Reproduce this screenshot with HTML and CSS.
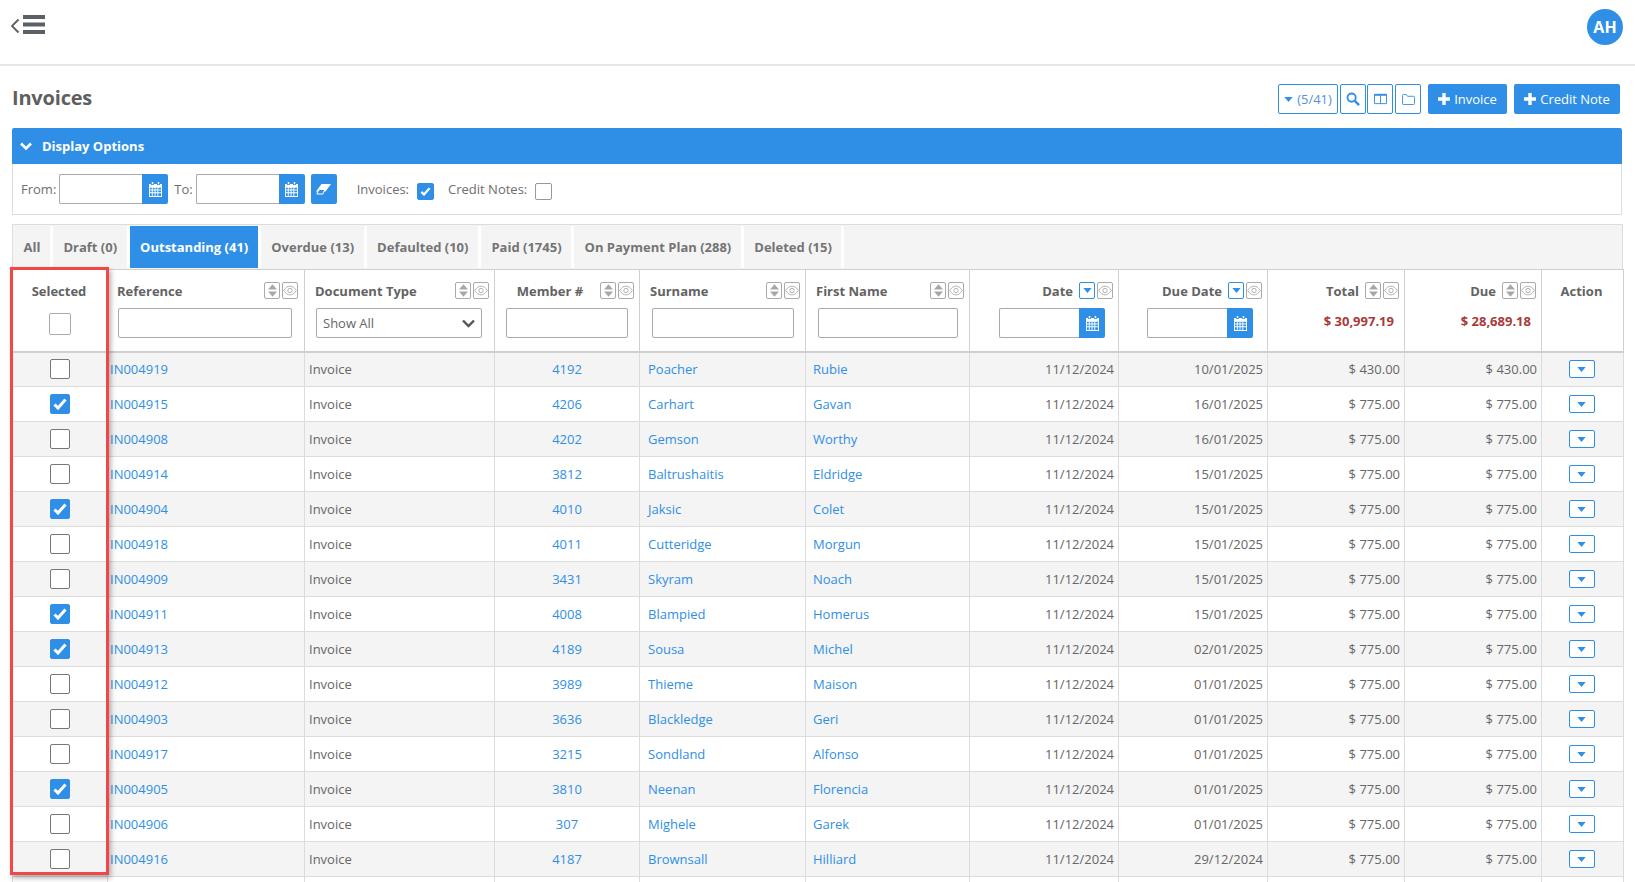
FILE: index.html
```html
<!DOCTYPE html>
<html lang="en">
<head>
<meta charset="utf-8">
<title>Invoices</title>
<link rel="stylesheet" href="styles.css">
</head>
<body>
<svg class="defs" width="0" height="0" aria-hidden="true">
  <symbol id="cal" viewBox="0 0 14 16"><path fill="currentColor" fill-rule="evenodd" d="M3 0h1.6v2.4H3zM9.4 0H11v2.4H9.400zM0 2h2.200v1.200h3.200V2h3.200v1.200h3.200V2H14v14H0zM1 6v2h2V6zm3 0v2h2V6zm3 0v2h2V6zm3 0v2h3V6zM1 9v2h2V9zm3 0v2h2V9zm3 0v2h2V9zm3 0v2h3V9zM1 12v3h2v-3zm3 0v3h2v-3zm3 0v3h2v-3zm3 0v3h3v-3z"/></symbol>
  <symbol id="caret" viewBox="0 0 10 6"><path fill="currentColor" d="M0 0h10L5 6z"/></symbol>
  <symbol id="sort" viewBox="0 0 10 14"><path fill="#a5a8ab" d="M5 0l5 6H0zM0 8h10l-5 6z"/></symbol>
  <symbol id="eye" viewBox="0 0 16 12"><path fill="none" stroke="#a5a8ab" d="M.8 6C3 2.500 5.500 1 8 1s5 1.500 7.200 5C13 9.500 10.500 11 8 11S3 9.500.8 6z"/><circle cx="8" cy="6" r="2.500" fill="none" stroke="#a5a8ab"/></symbol>
  <symbol id="check" viewBox="0 0 14 12"><path fill="none" stroke="#fff" stroke-width="3" d="M1.500 6.500l3.500 3.500 7.500-8.500"/></symbol>
  <symbol id="plus" viewBox="0 0 12 12"><path fill="#fff" d="M4.300 0h3.400v4.300H12v3.400H7.700V12H4.300V7.700H0V4.300h4.300z"/></symbol>
</svg>

<header class="topbar">
  <svg class="menu" width="36" height="22" viewBox="0 0 36 22"><path fill="none" stroke="#5b6066" stroke-width="1.800" d="M8.500 4.500L2 11l6.500 6.500"/><path fill="#5b6066" d="M13 0h22v4H13zM13 7.500h22v4H13zM13 15h22v4H13z"/></svg>
  <div class="avatar">AH</div>
</header>

<main class="main">
  <div class="title-row">
    <h1 class="title">Invoices</h1>
    <div class="tools">
      <button class="out out-count"><svg class="i-caret"><use href="#caret"/></svg>(5/41)</button>
      <button class="out out-icon out-search"><svg width="14" height="14" viewBox="0 0 15 15"><circle cx="6" cy="6" r="4.400" fill="none" stroke="currentColor" stroke-width="2"/><path stroke="currentColor" stroke-width="2.600" d="M9.500 9.500l4.500 4.500"/></svg></button>
      <button class="out out-icon"><svg width="13" height="12" viewBox="0 0 14 13"><path fill="none" stroke="currentColor" d="M.5 1.500h13v10H.5zM7 1.500v10"/><path fill="currentColor" d="M.5 1h13v2H.5z"/></svg></button>
      <button class="out out-icon"><svg width="13" height="11" viewBox="0 0 14 12"><path fill="none" stroke="currentColor" d="M.5 10.500v-9a1 1 0 0 1 1-1h3l1.500 2h6.500a1 1 0 0 1 1 1v7a1 1 0 0 1-1 1h-11a1 1 0 0 1-1-1z"/></svg></button>
      <button class="solid solid-inv"><svg class="i-plus"><use href="#plus"/></svg>Invoice</button>
      <button class="solid solid-cn"><svg class="i-plus"><use href="#plus"/></svg>Credit Note</button>
    </div>
  </div>

  <section class="options">
    <div class="options-head">
      <svg class="chev" width="12" height="9" viewBox="0 0 12 9"><path fill="none" stroke="#fff" stroke-width="2.600" d="M1 1.500l5 5 5-5"/></svg>
      <span>Display Options</span>
    </div>
    <div class="options-body">
      <label class="lbl lbl-from">From:</label>
      <div class="dategroup dg-top"><input class="dateinput" type="text"><span class="addon"><svg class="i-cal"><use href="#cal"/></svg></span></div>
      <label class="lbl lbl-to">To:</label>
      <div class="dategroup dg-top"><input class="dateinput" type="text"><span class="addon"><svg class="i-cal"><use href="#cal"/></svg></span></div>
      <button class="eraser"><svg width="15" height="11" viewBox="0 0 15 11"><path fill="#fff" d="M5.500 0H15L9.500 7.500H0z"/><path fill="#2f8fe6" stroke="#fff" d="M1.500 8l2-2.500H9L7.500 8 7 10H1z"/></svg></button>
      <label class="lbl lbl-inv">Invoices:</label>
      <span class="cb cb-s on"><svg class="i-check"><use href="#check"/></svg></span>
      <label class="lbl lbl-cn">Credit Notes:</label>
      <span class="cb cb-s"></span>
    </div>
  </section>

  <nav class="tabs">
    <a class="tab">All</a>
    <a class="tab">Draft (0)</a>
    <a class="tab active">Outstanding (41)</a>
    <a class="tab">Overdue (13)</a>
    <a class="tab">Defaulted (10)</a>
    <a class="tab">Paid (1745)</a>
    <a class="tab">On Payment Plan (288)</a>
    <a class="tab">Deleted (15)</a>
  </nav>

  <table class="grid">
    <colgroup>
      <col class="c1"><col class="c2"><col class="c3"><col class="c4"><col class="c5"><col class="c6"><col class="c7"><col class="c8"><col class="c9"><col class="c10"><col class="c11">
    </colgroup>
    <thead>
      <tr>
        <th>
          <div class="hd"><span class="hl center nudge-l">Selected</span></div>
          <div class="hf center-box"><span class="cb cb-h"></span></div>
        </th>
        <th class="th-ref">
          <div class="hd"><span class="hl left">Reference</span><span class="sb"><svg class="i-sort"><use href="#sort"/></svg></span><span class="sb"><svg class="i-eye"><use href="#eye"/></svg></span></div>
          <div class="hf"><input class="filter" type="text"></div>
        </th>
        <th>
          <div class="hd"><span class="hl left">Document Type</span><span class="sb"><svg class="i-sort"><use href="#sort"/></svg></span><span class="sb"><svg class="i-eye"><use href="#eye"/></svg></span></div>
          <div class="hf"><div class="select"><span>Show All</span><svg width="13" height="9" viewBox="0 0 13 9"><path fill="none" stroke="#555" stroke-width="2.400" d="M1 1.500l5.500 5.500L12 1.500"/></svg></div></div>
        </th>
        <th>
          <div class="hd"><span class="hl center nudge-r">Member #</span><span class="sb"><svg class="i-sort"><use href="#sort"/></svg></span><span class="sb"><svg class="i-eye"><use href="#eye"/></svg></span></div>
          <div class="hf"><input class="filter" type="text"></div>
        </th>
        <th>
          <div class="hd"><span class="hl left">Surname</span><span class="sb"><svg class="i-sort"><use href="#sort"/></svg></span><span class="sb"><svg class="i-eye"><use href="#eye"/></svg></span></div>
          <div class="hf hf-m"><input class="filter" type="text"></div>
        </th>
        <th>
          <div class="hd"><span class="hl left">First Name</span><span class="sb"><svg class="i-sort"><use href="#sort"/></svg></span><span class="sb"><svg class="i-eye"><use href="#eye"/></svg></span></div>
          <div class="hf hf-m"><input class="filter" type="text"></div>
        </th>
        <th>
          <div class="hd"><span class="hl right">Date</span><span class="sb sb-on"><svg class="i-caret"><use href="#caret"/></svg></span><span class="sb"><svg class="i-eye"><use href="#eye"/></svg></span></div>
          <div class="hf hf-date hf-date1"><div class="dategroup dg-col"><input class="dateinput" type="text"><span class="addon"><svg class="i-cal"><use href="#cal"/></svg></span></div></div>
        </th>
        <th>
          <div class="hd"><span class="hl right">Due Date</span><span class="sb sb-on"><svg class="i-caret"><use href="#caret"/></svg></span><span class="sb"><svg class="i-eye"><use href="#eye"/></svg></span></div>
          <div class="hf hf-date"><div class="dategroup dg-col"><input class="dateinput" type="text"><span class="addon"><svg class="i-cal"><use href="#cal"/></svg></span></div></div>
        </th>
        <th>
          <div class="hd"><span class="hl right">Total</span><span class="sb"><svg class="i-sort"><use href="#sort"/></svg></span><span class="sb"><svg class="i-eye"><use href="#eye"/></svg></span></div>
          <div class="sum">$ 30,997.19</div>
        </th>
        <th>
          <div class="hd"><span class="hl right">Due</span><span class="sb"><svg class="i-sort"><use href="#sort"/></svg></span><span class="sb"><svg class="i-eye"><use href="#eye"/></svg></span></div>
          <div class="sum">$ 28,689.18</div>
        </th>
        <th>
          <div class="hd"><span class="hl center nudge-l">Action</span></div>
        </th>
      </tr>
    </thead>
    <tbody>
      <tr><td class="mid"><span class="cb cb-r"></span></td><td class="ref"><a>IN004919</a></td><td class="doc">Invoice</td><td class="mem"><a>4192</a></td><td class="nm"><a>Poacher</a></td><td class="fn"><a>Rubie</a></td><td class="num">11/12/2024</td><td class="num">10/01/2025</td><td class="num">$ 430.00</td><td class="num">$ 430.00</td><td class="mid act-cell"><button class="act"><svg class="i-caret"><use href="#caret"/></svg></button></td></tr>
      <tr><td class="mid"><span class="cb cb-r on"><svg class="i-check-l"><use href="#check"/></svg></span></td><td class="ref"><a>IN004915</a></td><td class="doc">Invoice</td><td class="mem"><a>4206</a></td><td class="nm"><a>Carhart</a></td><td class="fn"><a>Gavan</a></td><td class="num">11/12/2024</td><td class="num">16/01/2025</td><td class="num">$ 775.00</td><td class="num">$ 775.00</td><td class="mid act-cell"><button class="act"><svg class="i-caret"><use href="#caret"/></svg></button></td></tr>
      <tr><td class="mid"><span class="cb cb-r"></span></td><td class="ref"><a>IN004908</a></td><td class="doc">Invoice</td><td class="mem"><a>4202</a></td><td class="nm"><a>Gemson</a></td><td class="fn"><a>Worthy</a></td><td class="num">11/12/2024</td><td class="num">16/01/2025</td><td class="num">$ 775.00</td><td class="num">$ 775.00</td><td class="mid act-cell"><button class="act"><svg class="i-caret"><use href="#caret"/></svg></button></td></tr>
      <tr><td class="mid"><span class="cb cb-r"></span></td><td class="ref"><a>IN004914</a></td><td class="doc">Invoice</td><td class="mem"><a>3812</a></td><td class="nm"><a>Baltrushaitis</a></td><td class="fn"><a>Eldridge</a></td><td class="num">11/12/2024</td><td class="num">15/01/2025</td><td class="num">$ 775.00</td><td class="num">$ 775.00</td><td class="mid act-cell"><button class="act"><svg class="i-caret"><use href="#caret"/></svg></button></td></tr>
      <tr><td class="mid"><span class="cb cb-r on"><svg class="i-check-l"><use href="#check"/></svg></span></td><td class="ref"><a>IN004904</a></td><td class="doc">Invoice</td><td class="mem"><a>4010</a></td><td class="nm"><a>Jaksic</a></td><td class="fn"><a>Colet</a></td><td class="num">11/12/2024</td><td class="num">15/01/2025</td><td class="num">$ 775.00</td><td class="num">$ 775.00</td><td class="mid act-cell"><button class="act"><svg class="i-caret"><use href="#caret"/></svg></button></td></tr>
      <tr><td class="mid"><span class="cb cb-r"></span></td><td class="ref"><a>IN004918</a></td><td class="doc">Invoice</td><td class="mem"><a>4011</a></td><td class="nm"><a>Cutteridge</a></td><td class="fn"><a>Morgun</a></td><td class="num">11/12/2024</td><td class="num">15/01/2025</td><td class="num">$ 775.00</td><td class="num">$ 775.00</td><td class="mid act-cell"><button class="act"><svg class="i-caret"><use href="#caret"/></svg></button></td></tr>
      <tr><td class="mid"><span class="cb cb-r"></span></td><td class="ref"><a>IN004909</a></td><td class="doc">Invoice</td><td class="mem"><a>3431</a></td><td class="nm"><a>Skyram</a></td><td class="fn"><a>Noach</a></td><td class="num">11/12/2024</td><td class="num">15/01/2025</td><td class="num">$ 775.00</td><td class="num">$ 775.00</td><td class="mid act-cell"><button class="act"><svg class="i-caret"><use href="#caret"/></svg></button></td></tr>
      <tr><td class="mid"><span class="cb cb-r on"><svg class="i-check-l"><use href="#check"/></svg></span></td><td class="ref"><a>IN004911</a></td><td class="doc">Invoice</td><td class="mem"><a>4008</a></td><td class="nm"><a>Blampied</a></td><td class="fn"><a>Homerus</a></td><td class="num">11/12/2024</td><td class="num">15/01/2025</td><td class="num">$ 775.00</td><td class="num">$ 775.00</td><td class="mid act-cell"><button class="act"><svg class="i-caret"><use href="#caret"/></svg></button></td></tr>
      <tr><td class="mid"><span class="cb cb-r on"><svg class="i-check-l"><use href="#check"/></svg></span></td><td class="ref"><a>IN004913</a></td><td class="doc">Invoice</td><td class="mem"><a>4189</a></td><td class="nm"><a>Sousa</a></td><td class="fn"><a>Michel</a></td><td class="num">11/12/2024</td><td class="num">02/01/2025</td><td class="num">$ 775.00</td><td class="num">$ 775.00</td><td class="mid act-cell"><button class="act"><svg class="i-caret"><use href="#caret"/></svg></button></td></tr>
      <tr><td class="mid"><span class="cb cb-r"></span></td><td class="ref"><a>IN004912</a></td><td class="doc">Invoice</td><td class="mem"><a>3989</a></td><td class="nm"><a>Thieme</a></td><td class="fn"><a>Maison</a></td><td class="num">11/12/2024</td><td class="num">01/01/2025</td><td class="num">$ 775.00</td><td class="num">$ 775.00</td><td class="mid act-cell"><button class="act"><svg class="i-caret"><use href="#caret"/></svg></button></td></tr>
      <tr><td class="mid"><span class="cb cb-r"></span></td><td class="ref"><a>IN004903</a></td><td class="doc">Invoice</td><td class="mem"><a>3636</a></td><td class="nm"><a>Blackledge</a></td><td class="fn"><a>Geri</a></td><td class="num">11/12/2024</td><td class="num">01/01/2025</td><td class="num">$ 775.00</td><td class="num">$ 775.00</td><td class="mid act-cell"><button class="act"><svg class="i-caret"><use href="#caret"/></svg></button></td></tr>
      <tr><td class="mid"><span class="cb cb-r"></span></td><td class="ref"><a>IN004917</a></td><td class="doc">Invoice</td><td class="mem"><a>3215</a></td><td class="nm"><a>Sondland</a></td><td class="fn"><a>Alfonso</a></td><td class="num">11/12/2024</td><td class="num">01/01/2025</td><td class="num">$ 775.00</td><td class="num">$ 775.00</td><td class="mid act-cell"><button class="act"><svg class="i-caret"><use href="#caret"/></svg></button></td></tr>
      <tr><td class="mid"><span class="cb cb-r on"><svg class="i-check-l"><use href="#check"/></svg></span></td><td class="ref"><a>IN004905</a></td><td class="doc">Invoice</td><td class="mem"><a>3810</a></td><td class="nm"><a>Neenan</a></td><td class="fn"><a>Florencia</a></td><td class="num">11/12/2024</td><td class="num">01/01/2025</td><td class="num">$ 775.00</td><td class="num">$ 775.00</td><td class="mid act-cell"><button class="act"><svg class="i-caret"><use href="#caret"/></svg></button></td></tr>
      <tr><td class="mid"><span class="cb cb-r"></span></td><td class="ref"><a>IN004906</a></td><td class="doc">Invoice</td><td class="mem"><a>307</a></td><td class="nm"><a>Mighele</a></td><td class="fn"><a>Garek</a></td><td class="num">11/12/2024</td><td class="num">01/01/2025</td><td class="num">$ 775.00</td><td class="num">$ 775.00</td><td class="mid act-cell"><button class="act"><svg class="i-caret"><use href="#caret"/></svg></button></td></tr>
      <tr><td class="mid"><span class="cb cb-r"></span></td><td class="ref"><a>IN004916</a></td><td class="doc">Invoice</td><td class="mem"><a>4187</a></td><td class="nm"><a>Brownsall</a></td><td class="fn"><a>Hilliard</a></td><td class="num">11/12/2024</td><td class="num">29/12/2024</td><td class="num">$ 775.00</td><td class="num">$ 775.00</td><td class="mid act-cell"><button class="act"><svg class="i-caret"><use href="#caret"/></svg></button></td></tr>
      <tr><td></td><td></td><td></td><td></td><td></td><td></td><td></td><td></td><td></td><td></td><td></td></tr>
    </tbody>
  </table>
</main>

<div class="highlight"></div>
</body>
</html>
```

FILE: styles.css
```css
* { box-sizing: border-box; }
html, body { margin: 0; height: 882px; overflow: hidden; background: #fff; }
body { font-family: "Open Sans", "Noto Sans", sans-serif; font-size: 13px; color: #666; position: relative; }
.defs { position: absolute; }
button { font-family: inherit; font-size: 13px; padding: 0; cursor: pointer; }
input { font-family: inherit; outline: none; }

.topbar { height: 66px; border-bottom: 2px solid #e6e6e6; display: flex; align-items: flex-start; justify-content: space-between; padding: 15px 12px 0 10px; }
.menu { display: block; }
.avatar { width: 36px; height: 36px; margin-top: -6px; border-radius: 50%; background: #2f8fe6; color: #fff; font-weight: 700; font-size: 16px; display: flex; align-items: center; justify-content: center; }

.main { padding: 18px 12px 0; }
.title-row { display: flex; justify-content: space-between; align-items: flex-start; height: 30px; margin-bottom: 14px; }
.title { margin: 0; font-size: 20px; line-height: 28px; font-weight: 700; letter-spacing: -.2px; color: #5f5f5f; }
.tools { display: flex; margin-right: 3px; }
.out { height: 30px; background: #fff; border: 1px solid #2f8fe6; color: #2f8fe6; border-radius: 2px; display: flex; align-items: center; justify-content: center; margin-right: 2px; }
.out-count { width: 60px; font-size: 13px; color: #5b8fd6; gap: 4px; }
.out-icon { width: 26px; }
.out-search { margin-right: 1px; }
.solid { height: 30px; background: #2f8fe6; border: 0; color: #fff; border-radius: 2px; display: flex; align-items: center; justify-content: center; gap: 4px; }
.solid-inv { width: 79px; margin-left: 5px; }
.solid-cn { width: 106px; margin-left: 7px; }
.i-plus { width: 12px; height: 12px; }
.i-caret { width: 9px; height: 5px; color: #2f8fe6; }

.options { margin-right: 1px; margin-bottom: 9px; }
.options-head { height: 36px; background: #2f8fe6; color: #fff; font-weight: 700; display: flex; align-items: center; padding-left: 8px; gap: 10px; border-radius: 2px 2px 0 0; }
.options-body { height: 51px; border: 1px solid #ddd; border-top: 0; display: flex; align-items: flex-start; padding: 10px 0 0 8px; }
.lbl { line-height: 30px; color: #6e6e6e; }
.lbl-from { margin-right: 3px; }
.lbl-to { margin: 0 3px 0 6px; }
.lbl-inv { margin: 0 8px 0 20px; }
.lbl-cn { margin: 0 8px 0 14px; }
.dategroup { display: flex; height: 30px; }
.dg-top { width: 109px; }
.dg-col { width: 106px; }
.dateinput { flex: 1; min-width: 0; height: 30px; border: 1px solid #aaa; border-right: 0; border-radius: 2px 0 0 2px; background: #fff; }
.addon { width: 26px; height: 30px; background: #2f8fe6; border-radius: 0 2px 2px 0; color: #fff; display: flex; align-items: center; justify-content: center; }
.i-cal { width: 13px; height: 15px; color: #fff; }
.eraser { width: 26px; height: 30px; margin-left: 6px; background: #2f8fe6; border: 0; border-radius: 2px; display: flex; align-items: center; justify-content: center; }

.cb { display: inline-flex; align-items: center; justify-content: center; background: #fff; border: 1px solid #777; border-radius: 2px; vertical-align: top; }
.cb.on { background: #2f8fe6; border-color: #2f8fe6; }
.cb-s { width: 17px; height: 17px; margin-top: 9px; border-color: #999; }
.cb-r { width: 20px; height: 20px; }
.cb-h { width: 22px; height: 22px; border-color: #aaa; }
.i-check { width: 11px; height: 9px; }
.i-check-l { width: 14px; height: 12px; }

.tabs { height: 45px; background: #f4f4f4; border: 1px solid #ddd; border-bottom: 0; display: flex; padding-top: 1px; }
.tab { height: 42px; line-height: 42px; padding: 0 9.500px 0 10.500px; font-weight: 700; color: #747474; border-right: 3px solid #fff; background: #f4f4f4; white-space: nowrap; }
.tab.active { background: #2f8fe6; color: #fff; position: relative; box-shadow: -3px 0 0 #fff; }

.grid { width: 1611px; table-layout: fixed; border-collapse: collapse; border: 1px solid #d4d4d4; }
.c1 { width: 95px; } .c2 { width: 197px; } .c3 { width: 190px; } .c4 { width: 145px; } .c5 { width: 166px; } .c6 { width: 164px; } .c7 { width: 149px; } .c8 { width: 149px; } .c9 { width: 137px; } .c10 { width: 137px; } .c11 { width: 82px; }
th { height: 82px; padding: 12px 5px 0; vertical-align: top; border: 1px solid #d0d0d0; border-bottom: 2px solid #d0d0d0; font-weight: 400; }
.th-ref { padding-left: 4px; padding-right: 6px; }
.hd { display: flex; align-items: flex-start; gap: 2px; height: 18px; }
.hl { flex: 1; font-weight: 700; color: #636363; line-height: 18px; white-space: nowrap; }
.left { text-align: left; padding-left: 5px; }
.center { text-align: center; }
.nudge-l { padding-right: 2px; }
.nudge-r { padding-left: 2px; }
.right { text-align: right; padding-right: 4px; }
.sb { width: 16px; height: 17px; border: 1px solid #aaa; border-radius: 2px; display: flex; align-items: center; justify-content: center; background: #fff; flex: none; }
.sb-on { border-color: #2f8fe6; }
.i-sort { width: 9px; height: 13px; }
.i-eye { width: 14px; height: 11px; flex: none; }
.hf { margin-top: 8px; padding: 0 6px; }
.hf-m { padding: 0 6px 0 7px; }
.hf-date { display: flex; justify-content: flex-end; padding-right: 9px; }
.hf-date1 { padding-right: 8px; }
.center-box { display: flex; justify-content: center; margin-top: 13px; padding: 0; }
.filter { display: block; width: 100%; height: 30px; border: 1px solid #aaa; border-radius: 2px; background: #fff; }
.select { height: 30px; margin-right: 1px; border: 1px solid #aaa; border-radius: 2px; display: flex; align-items: center; justify-content: space-between; padding: 0 6px; color: #666; background: #fff; }
.sum { margin-top: 12px; text-align: right; font-weight: 700; color: #a93a3a; padding-right: 5px; }

tbody tr { height: 35px; }
tbody tr:nth-child(odd) { background: #f4f4f4; }
td { padding: 0 4px; border: 1px solid #dcdcdc; white-space: nowrap; }
td a { color: #2f8fe6; text-decoration: none; }
.mid { text-align: center; line-height: 0; }
.ref { padding-left: 2px; }
.doc { padding-left: 4px; }
.mem { text-align: center; }
.nm { padding-left: 8px; }
.fn { padding-left: 7px; }
.num { text-align: right; }
.act-cell { padding-right: 5px; padding-left: 3px; }
.act { width: 26px; height: 18px; background: #fff; border: 1px solid #2f8fe6; border-radius: 2px; display: inline-flex; align-items: center; justify-content: center; }

.highlight { position: absolute; left: 10px; top: 267px; width: 99px; height: 608px; border: 3px solid #f34747; box-shadow: 2px 3px 5px rgba(0,0,0,.3); pointer-events: none; }
```
